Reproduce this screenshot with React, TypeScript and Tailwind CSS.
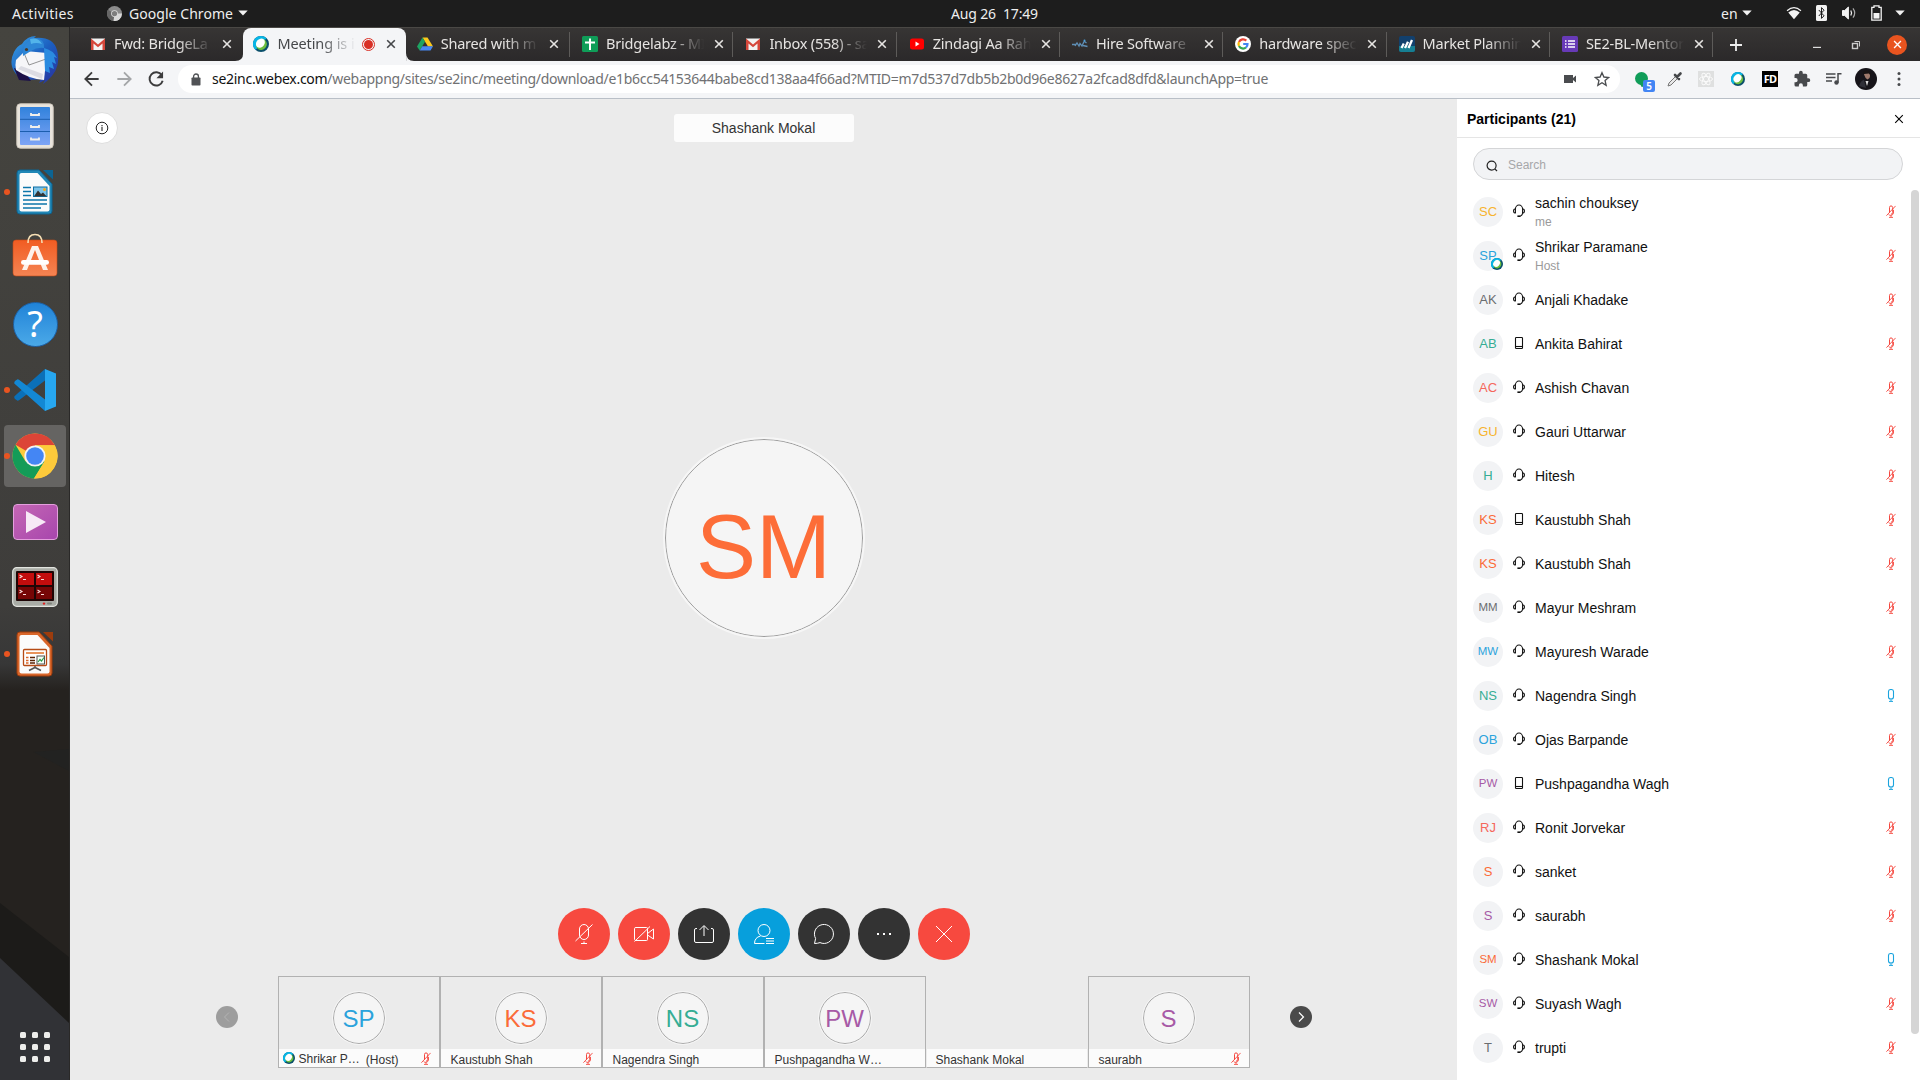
import type { ReactNode } from "react";

const ubuntu = "font-['Noto_Sans',sans-serif]";

/* ---------- shared glyphs ---------- */

function WebexBall({ className }: { className: string }) {
  return (
    <svg viewBox="0 0 16 16" className={className}>
      <circle cx="8" cy="8" r="8" fill="#0a4f6b" />
      <path d="M8 0A8 8 0 0 0 2.600 13.900L8 8 13.600 2.300A8 8 0 0 0 8 0Z" fill="#08b5e6" />
      <ellipse cx="8.400" cy="8.400" rx="5.300" ry="5.700" transform="rotate(40 8.400 8.400)" fill="#6cbf3f" />
      <ellipse cx="7.400" cy="7.200" rx="4.100" ry="5" transform="rotate(40 7.400 7.200)" fill="#fff" />
    </svg>
  );
}

function CloseGlyph({ className }: { className: string }) {
  return (
    <svg viewBox="0 0 10 10" className={className} fill="none" stroke="currentColor">
      <path d="M1.2 1.2 8.8 8.8M8.8 1.2 1.2 8.8" />
    </svg>
  );
}

function MicOff({ className }: { className: string }) {
  return (
    <svg viewBox="0 0 10 13" className={className} fill="none" stroke="#f5483f">
      <path d="M3.500 7.800V2.500Q3.500 0.900 5 0.900T6.700 2.500V7.500Q6.700 9.200 5 9.200" />
      <path d="M2.500 9.300Q3.300 10.400 5 10.400T7.500 8V5M5 10.400V12M3 12.400H7M0.400 10.700 9.600 0.900" strokeWidth="0.900" />
    </svg>
  );
}

function MicOn({ className }: { className: string }) {
  return (
    <svg viewBox="0 0 10 13" className={className} fill="none" stroke="#1ba4de">
      <path d="M2.500 2.500Q2.500 0.500 5 0.500T7.500 2.500V8Q7.500 10 5 10T2.500 8Z" strokeWidth="1.100" />
      <path d="M5 10.400V12M3 12.400H7" strokeWidth="1" />
    </svg>
  );
}

function Headset() {
  return (
    <svg viewBox="0 0 14 14" className="h-[14px] w-[14px]" fill="none" stroke="#111" strokeWidth="1.1">
      <path d="M3.400 9.300V5.300A3.600 4.300 0 0 1 10.600 5.300V9.300M3.400 4.800Q1.500 5 1.500 7T3.400 9.200M10.600 4.800Q12.500 5 12.500 7T10.600 9.200M10.600 9.500Q10 11.500 8.400 12" />
      <path d="M5.400 12.200H8.600" strokeWidth="1.6" />
    </svg>
  );
}

function Phone() {
  return (
    <svg viewBox="0 0 14 14" className="h-[14px] w-[14px]" fill="none" stroke="#111" strokeWidth="1.1">
      <rect x="3.500" y="1.500" width="7" height="11" rx="0.8" />
      <path d="M3.500 10.500H10.500" />
    </svg>
  );
}

/* ---------- GNOME top bar ---------- */

function Caret({ className }: { className: string }) {
  return (
    <svg viewBox="0 0 10 6" className={className}>
      <path d="M0.3 0.4H9.7L5 5.6Z" fill="#f2f2f2" />
    </svg>
  );
}

function TopBar() {
  return (
    <header className={`relative flex h-[27px] shrink-0 items-center bg-[#1d1d1d] pb-px text-[14px] text-[#eee] ${ubuntu}`}>
      <span className="ml-3 w-[95px] whitespace-nowrap tracking-[0.350px]">Activities</span>
      <svg viewBox="0 0 16 16" className="h-[15px] w-[15px]">
        <circle cx="8" cy="8" r="8" fill="#8b8b8b" />
        <path d="M8 8 1 4A8 8 0 0 0 7 16Z" fill="#666" />
        <path d="M8 8H16A8 8 0 0 1 7 16Z" fill="#d8d8d8" />
        <circle cx="8" cy="8" r="3.6" fill="#ddd" />
        <circle cx="8" cy="8" r="2.8" fill="#7d7d7d" />
      </svg>
      <span className="ml-[7px] w-[109px] whitespace-nowrap tracking-[0.050px]">Google Chrome</span>
      <Caret className="h-[6px] w-[10px]" />
      <span className="absolute left-[951px] whitespace-pre tracking-[-0.15px]">Aug 26  17:49</span>
      <div className="ml-auto flex items-center">
        <span className="mr-[5px] w-[16px]">en</span>
        <Caret className="mr-[34px] h-[6px] w-[10px]" />
        <svg viewBox="0 0 16 14" className="mr-[14px] h-[13px] w-[16px]">
          <path d="M0.5 4Q8-2.6 15.5 4" fill="none" stroke="#f2f2f2" strokeWidth="1.3" />
          <path d="M1.8 6Q8 0.6 14.2 6L8 13.2Z" fill="#f2f2f2" />
        </svg>
        <svg viewBox="0 0 11 16" className="mr-[15px] h-4 w-[11px]">
          <rect width="11" height="16" rx="1.5" fill="#f2f2f2" />
          <path d="M2.8 5 8 10.8 5.5 13.4V2.6L8 5.2 2.8 11" fill="none" stroke="#1d1d1d" />
        </svg>
        <svg viewBox="0 0 15 14" className="mr-[14px] h-[14px] w-[15px]" fill="none" stroke="#f2f2f2">
          <path d="M0.5 4.5H2.7L6.4 1V13L2.7 9.5H0.5Z" fill="#f2f2f2" />
          <path d="M8.8 4.5Q10.4 7 8.8 9.5" strokeWidth="1.3" />
          <path d="M11 2.3Q14.4 7 11 11.7" stroke="#aaa" strokeWidth="1.2" />
        </svg>
        <svg viewBox="0 0 11 16" className="mr-[13px] h-4 w-[11px]">
          <path d="M3 0.8H8V2.4H10.2V15.2H0.8V2.4H3Z" fill="none" stroke="#f2f2f2" strokeWidth="1.3" />
          <rect x="2.5" y="8" width="6" height="5.6" fill="#f2f2f2" />
        </svg>
        <Caret className="mr-[15px] h-[6px] w-[10px]" />
      </div>
    </header>
  );
}

/* ---------- dock ---------- */

function Thunderbird() {
  return (
    <svg viewBox="0 0 48 48" className="h-12 w-12">
      <defs>
        <linearGradient id="tb" x1="0" y1="0" x2="1" y2="1">
          <stop offset="0" stopColor="#3aa3e6" />
          <stop offset=".5" stopColor="#1c5fc0" />
          <stop offset="1" stopColor="#2a2e9a" />
        </linearGradient>
      </defs>
      <path d="M11 8Q16 0 25 0L23 2Q42 0 46 14Q51 32 36 45L32 48 34 44 28 47 30 43Q12 46 5 38Q-3 28 3 16Q6 10 11 8Z" fill="url(#tb)" />
      <path d="M3 32 8 44 20 45 14 36Z" fill="#1c1048" />
      <path d="M5 24 14 15 36 17 33 44Q18 43 5 34Q4 28 5 24Z" fill="#f6f6f8" />
      <path d="M7 33 31 43 32 38 10 30Z" fill="#dcdce3" />
      <path d="M13 17 18 29 35 23" fill="none" stroke="#888" strokeWidth="0.9" />
      <path d="M12 20Q11 6 24 2Q34 3 33 12Q26 11 20 15Q15 18 12 20Z" fill="#2d86d6" />
      <path d="M19 3Q27 1 31 8Q25 6 20 8Z" fill="#52b3ea" />
      <path d="M33 12Q42 14 46 22L43 21 45 28 41 26 43 33 38 31 39 37 34 35Z" fill="#2a8be0" />
      <circle cx="15.5" cy="13.5" r="1.6" fill="#4b3827" />
    </svg>
  );
}

function Files() {
  return (
    <svg viewBox="0 0 38 46" className="h-[46px] w-[38px]">
      <defs>
        <linearGradient id="fl" x1="0" y1="0" x2="0" y2="1">
          <stop offset="0" stopColor="#3182dc" />
          <stop offset="1" stopColor="#7ea4f6" />
        </linearGradient>
      </defs>
      <rect x="0.8" y="0.8" width="36.4" height="44.4" rx="3.5" fill="#e9e4dc" stroke="#cfc8bd" />
      <rect x="4" y="4" width="30" height="38" rx="1" fill="url(#fl)" />
      <path d="M4 16.3H34M4 28.5H34" stroke="#1c5eae" />
      <path d="M15 10V12H23V10M15 22V24H23V22M15 34.5V36.500H23V34.5" fill="none" stroke="#f2f0ec" strokeWidth="1.8" />
    </svg>
  );
}

function Doc({ frame, dark, children }: { frame: string; dark: string; children: ReactNode }) {
  return (
    <svg viewBox="0 0 38 46" className="h-[46px] w-[38px]">
      <path d="M4 1H23L36 15V42Q36 45 33 45H4Q1 45 1 42V4Q1 1 4 1Z" fill={frame} stroke={dark} />
      <path d="M5.500 4H21.5L33.500 17V40.500Q33.5 42.500 31.500 42.500H5.500Q3.500 42.500 3.500 40.500V6Q3.500 4 5.500 4Z" fill="#fbfbfb" />
      <path d="M27 1H37V10.500Z" fill={dark} />
      {children}
    </svg>
  );
}

function Writer() {
  return (
    <Doc frame="#2187b6" dark="#0c6493">
      <path d="M7 18.500H15M7 22.500H15M7 26.500H15M7 31H31M7 35H31M7 39H25" stroke="#0d76aa" strokeWidth="1.7" />
      <rect x="17.500" y="18" width="13.500" height="9.500" fill="#7cc3e8" stroke="#0d6fa3" />
      <path d="M18 27.300 22 21.500 25 25 27 23.500 30.500 27.300Z" fill="#333" />
      <circle cx="28.500" cy="20.500" r="1.500" fill="#f3a81c" />
    </Doc>
  );
}

function Impress() {
  return (
    <Doc frame="#d9662a" dark="#9c3c0d">
      <rect x="7.500" y="18.500" width="23" height="16" rx="1" fill="#fff" stroke="#b64b15" strokeWidth="1.300" />
      <path d="M10 22H28" stroke="#e8935b" strokeWidth="2" />
      <path d="M10 26.500H12.500M10 29.500H12.500M10 32H12.500" stroke="#d9662a" strokeWidth="1.400" />
      <path d="M14 26.500H19M14 29.500H19M14 32H19" stroke="#5a2305" strokeWidth="1.600" />
      <rect x="21" y="25" width="7.500" height="8" fill="#f5fff7" stroke="#555" />
      <path d="M22 31 24 28.500 25.500 30 28 26.500" fill="none" stroke="#2c9a4a" strokeWidth="1.200" />
      <path d="M19 35V37M13 39.500 19 36.500 25 39.500" fill="none" stroke="#555" strokeWidth="1.600" />
    </Doc>
  );
}

function Software() {
  return (
    <svg viewBox="0 0 46 44" className="mb-[6px] h-11 w-[46px]">
      <defs>
        <linearGradient id="sw" x1="0" y1="0" x2="0" y2="1">
          <stop offset="0" stopColor="#f15c22" />
          <stop offset="1" stopColor="#f58453" />
        </linearGradient>
      </defs>
      <rect x="1" y="7" width="44" height="36" rx="3" fill="url(#sw)" stroke="#c44a1a" strokeWidth="0.600" />
      <path d="M16 10Q16 1.500 23 1.500T30 10" fill="none" stroke="#f6dfb4" strokeWidth="1.600" />
      <path d="M20 13H26L36 37H31L23 17 15 37H10Z" fill="#fdf1ea" />
      <rect x="9" y="27" width="28" height="4.800" rx="2.400" fill="#fff" />
    </svg>
  );
}

function Help() {
  return (
    <div className="flex h-[45px] w-[45px] items-center justify-center rounded-full border border-[#1d62a8] bg-linear-to-b from-[#1f83d8] to-[#4aa9e8] font-['Noto_Sans',sans-serif] text-[36px] leading-none text-white">
      ?
    </div>
  );
}

function VsCode() {
  return (
    <svg viewBox="0 0 42 42" className="h-[42px] w-[42px]">
      <path d="M31 0 3.500 24.500 0.300 27.500Q0 29 1 30L3.200 31.500Q4 32 5 31.200L31 11.500Z" fill="#0b70b8" />
      <path d="M31 42 0.300 14.500Q0 13 1 12L3.200 10.500Q4 10 5 10.800L31 30.500Z" fill="#1388d4" />
      <path d="M31 0 42 4.500V37.500L31 42Z" fill="#27a7f0" />
    </svg>
  );
}

function Chrome() {
  return (
    <svg viewBox="0 0 46 46" className="h-[46px] w-[46px]">
      <circle cx="23" cy="23" r="22.500" fill="#fdca3b" />
      <path d="M23 23 3.500 11.750A22.500 22.500 0 0 1 42.800 12.300H23Z" fill="#dc4437" />
      <path d="M3.500 11.750A22.500 22.500 0 0 0 22 45.500L32.500 28.500 23 23 13.500 28.400Z" fill="#149c58" />
      <path d="M32.500 28.500 22 45.500A22.500 22.500 0 0 0 42.800 12.300H23Z" fill="#fdca3b" />
      <circle cx="23" cy="23" r="10.600" fill="#f3f3f3" />
      <circle cx="23" cy="23" r="8.800" fill="#4486f4" />
    </svg>
  );
}

function Videos() {
  return (
    <div className="flex h-9 w-[45px] items-center justify-center rounded-[4px] border border-[#e49fdd] bg-linear-to-br from-[#c466b4] to-[#a846ad]">
      <svg viewBox="0 0 20 22" className="ml-0.5 h-[22px] w-5">
        <path d="M0 0 20 11 0 22Z" fill="#f7e9f6" />
      </svg>
    </div>
  );
}

function Terminator() {
  return (
    <svg viewBox="0 0 46 40" className="mb-[2px] h-10 w-[46px]">
      <rect x="0.700" y="0.700" width="44.600" height="38.600" rx="4" fill="#a9aca6" stroke="#e2e4df" strokeWidth="1.200" />
      <rect x="4" y="4" width="38" height="30" rx="1" fill="#1f0606" />
      <path d="M6 6H22V18H6ZM24 6H40V18H24Z" fill="#c20d0d" />
      <path d="M6 20H22V32H6ZM24 20H40V32H24Z" fill="#760606" />
      <path d="M7.500 8 10 9.500 7.500 11M11 12.500H14M25.500 8 28 9.500 25.500 11M29 12.500H32M7.500 23 10 24.500 7.500 26M11 27.500H14M25.500 23 28 24.500 25.500 26M29 27.500H32" fill="none" stroke="#f7d9d9" strokeWidth="1.100" />
      <circle cx="32" cy="36.600" r="1.200" fill="#e02020" />
      <rect x="35" y="35.400" width="5" height="2.200" rx="1" fill="#80837d" />
    </svg>
  );
}

const dockItems: { icon: ReactNode; running?: boolean; active?: boolean }[] = [
  { icon: <Thunderbird /> },
  { icon: <Files /> },
  { icon: <Writer />, running: true },
  { icon: <Software /> },
  { icon: <Help /> },
  { icon: <VsCode />, running: true },
  { icon: <Chrome />, running: true, active: true },
  { icon: <Videos /> },
  { icon: <Terminator /> },
  { icon: <Impress />, running: true },
];

function Dock() {
  return (
    <nav className="relative flex w-[70px] shrink-0 flex-col items-center justify-between border-r border-[#2a2928] bg-[#3e3d3b]">
      <svg viewBox="0 0 70 1053" className="absolute inset-0 h-full w-full" preserveAspectRatio="none">
        <defs>
          <linearGradient id="wall" x1="0" y1="0" x2="0" y2="1">
            <stop offset="0" stopColor="#45443f" />
            <stop offset=".55" stopColor="#3e3d3b" />
            <stop offset=".605" stopColor="#373737" />
            <stop offset=".63" stopColor="#25221f" />
            <stop offset="1" stopColor="#25221f" />
          </linearGradient>
        </defs>
        <rect width="70" height="1053" fill="url(#wall)" />
        <path d="M34 725 70 722V744Z" fill="#222221" />
        <path d="M0 876 70 930V1000L0 935Z" fill="#1c1b19" />
        <path d="M0 931 70 996V1053H0Z" fill="#313236" />
      </svg>
      <ul className="relative w-full">
        {dockItems.map((item, i) => (
          <li key={i} className="relative flex h-[66px] items-center justify-center py-[2px] pr-[3px] pl-1">
            <div className={`flex h-full w-full items-center justify-center rounded-[4px] ${item.active ? "bg-[#656462]" : ""}`}>
              {item.icon}
            </div>
            {item.running && <span className="absolute top-[30px] left-1 h-[6px] w-[6px] rounded-full bg-[#e95420]" />}
          </li>
        ))}
      </ul>
      <div className="relative mb-[18px] ml-px grid grid-cols-3 gap-[6px]">
        {Array.from({ length: 9 }, (_, i) => (
          <span key={i} className="h-[6px] w-[6px] rounded-[1.5px] bg-[#eeeeec]" />
        ))}
      </div>
    </nav>
  );
}

/* ---------- browser chrome ---------- */

function Gmail() {
  return (
    <svg viewBox="0 0 16 16" className="h-4 w-4">
      <path d="M1 2.500H15V14H1Z" fill="#f3f3f3" />
      <path d="M1 2.500 8 8.500 15 2.500V14H12.500V7.500L8 11.200 3.500 7.500V14H1Z" fill="#d5473b" />
    </svg>
  );
}

function Drive() {
  return (
    <svg viewBox="0 0 16 16" className="h-4 w-4">
      <path d="M5.500 1.500H10.500L16 10.500H11Z" fill="#fbc91c" />
      <path d="M5.500 1.500 8 5.700 2.700 14.500 0 10.500Z" fill="#1da362" />
      <path d="M2.700 14.500 5.300 10.300H16L13.500 14.500Z" fill="#4688f4" />
    </svg>
  );
}

const tabs: { title: string; icon: ReactNode; active?: boolean }[] = [
  { title: "Fwd: BridgeLa", icon: <Gmail /> },
  { title: "Meeting is i", icon: <WebexBall className="h-4 w-4" />, active: true },
  { title: "Shared with m", icon: <Drive /> },
  {
    title: "Bridgelabz - MI",
    icon: (
      <svg viewBox="0 0 16 16" className="h-4 w-4">
        <rect width="16" height="16" rx="1.500" fill="#0f9d58" />
        <path d="M8 2.500V14M3 6.500H13" stroke="#fff" strokeWidth="2" />
      </svg>
    ),
  },
  { title: "Inbox (558) - sa", icon: <Gmail /> },
  {
    title: "Zindagi Aa Rah",
    icon: (
      <svg viewBox="0 0 16 16" className="h-4 w-4">
        <rect x="1" y="2.500" width="14" height="11" rx="2.500" fill="#f00" />
        <path d="M6.500 5.600 10.500 8 6.500 10.400Z" fill="#fff" />
      </svg>
    ),
  },
  {
    title: "Hire Software",
    icon: (
      <svg viewBox="0 0 16 16" className="h-4 w-4" fill="none" stroke="#5f8fb5">
        <path d="M0 8.500H4M3 10 5 7 7 10 8 7.500 10 10 12 5.500M11 9.500 15.500 10.500M12 5 14.500 7" strokeWidth="1.300" />
        <circle cx="12.500" cy="4.500" r="1" fill="#4aa3e0" stroke="none" />
      </svg>
    ),
  },
  {
    title: "hardware spec",
    icon: (
      <svg viewBox="0 0 16 16" className="h-4 w-4" fill="none" strokeWidth="2.200">
        <circle cx="8" cy="8" r="8" fill="#fff" />
        <path d="M11.300 4.600A4.600 4.600 0 0 0 4 6" stroke="#ea4335" />
        <path d="M4 6A4.600 4.600 0 0 0 4 10" stroke="#fbbc05" />
        <path d="M4 10A4.600 4.600 0 0 0 11 11.500" stroke="#34a853" />
        <path d="M11 11.500Q12.600 10 12.500 8H8.200" stroke="#4285f4" />
      </svg>
    ),
  },
  {
    title: "Market Plannin",
    icon: (
      <svg viewBox="0 0 16 16" className="h-4 w-4">
        <rect width="16" height="16" rx="2" fill="#12406d" />
        <path d="M0 10H16V14Q16 16 14 16H2Q0 16 0 14Z" fill="#167f93" />
        <path d="M2.500 12 4.800 7.500M6 12 9 5.800M9.500 12 13 4" stroke="#fff" strokeWidth="2.300" />
      </svg>
    ),
  },
  {
    title: "SE2-BL-Mentor",
    icon: (
      <svg viewBox="0 0 16 16" className="h-4 w-4">
        <rect width="16" height="16" rx="1.500" fill="#673ab7" />
        <path d="M3 5H4.500M3 8H4.500M3 11H4.500M6 5H13M6 8H13M6 11H13" stroke="#fff" strokeWidth="1.500" />
      </svg>
    ),
  },
];

function TabStrip() {
  return (
    <div className={`flex h-[34px] shrink-0 items-center border-t border-[#4a4845] bg-linear-to-b from-[#373534] to-[#2b292a] pl-[9.500px] text-[14.500px] ${ubuntu}`}>
      {tabs.map((tab, i) => (
        <div
          key={tab.title}
          className={`relative flex h-[33px] shrink-0 items-center pb-px ${i > 2 ? "pl-[12px]" : "pl-[10.600px]"} ${
            i === 2 ? "w-[164px]" : "w-[163.300px]"
          } ${tab.active ? "rounded-t-lg bg-[#f4f5f7] text-[#45474a]" : "text-[#e6e4e2]"}`}
        >
          {tab.active && (
            <svg viewBox="0 0 179 8" className="absolute bottom-0 -left-2 h-2 w-[179.300px]" fill="#f4f5f7">
              <path d="M0 8Q8 8 8 0V8ZM179 8Q171 8 171 0V8Z" />
            </svg>
          )}
          {tab.icon}
          <span
            className={`-mt-px ml-2 overflow-hidden whitespace-nowrap ${
              tab.active
                ? "w-[79px] tracking-[-0.100px] mask-r-from-55% mask-r-to-100%"
                : "w-[98px] tracking-[-0.220px] mask-r-from-65% mask-r-to-100%"
            }`}
          >
            {tab.title}
          </span>
          {tab.active && (
            <span className="ml-[6px] flex h-[13px] w-[13px] items-center justify-center rounded-full border border-[#d93025]">
              <span className="h-[9px] w-[9px] rounded-full bg-[#d93025]" />
            </span>
          )}
          <CloseGlyph className={`h-[10px] w-[10px] stroke-[1.600] ${tab.active ? "ml-[11px]" : "ml-[10px]"}`} />
          {i > 1 && <span className="ml-auto h-[25px] w-px bg-[#5d5b59]" />}
        </div>
      ))}
      <svg viewBox="0 0 14 14" className="ml-[16px] h-[14px] w-[14px]" stroke="#eee" strokeWidth="1.800">
        <path d="M7 1V13M1 7H13" />
      </svg>
      <div className="ml-auto flex items-center pr-[13px]">
        <svg viewBox="0 0 10 10" className="mr-[30px] h-[10px] w-2">
          <path d="M0 8H10" stroke="#ddd" strokeWidth="1.500" />
        </svg>
        <svg viewBox="0 0 10 10" className="mr-[26px] h-[10px] w-[10px]" fill="none" stroke="#ccc">
          <rect x="1.500" y="3.500" width="5" height="5" strokeWidth="1.400" />
          <path d="M3.500 1.500H8.500V6.500" />
        </svg>
        <span className="flex h-5 w-5 items-center justify-center rounded-full bg-[#e9541f] text-white">
          <CloseGlyph className="h-[9px] w-[9px] stroke-[1.500]" />
        </span>
      </div>
    </div>
  );
}

function Toolbar() {
  return (
    <div className={`flex h-[38px] shrink-0 items-center border-b border-[#b9bfc7] bg-[#f4f5f7] pb-px ${ubuntu}`}>
      <svg viewBox="0 0 24 24" className="ml-[12px] h-5 w-5" fill="none" stroke="#3c3c3d" strokeWidth="2.200">
        <path d="M20 12H4M12 4 4 12 12 20" />
      </svg>
      <svg viewBox="0 0 24 24" className="ml-[12px] h-5 w-5" fill="none" stroke="#a4a6a8" strokeWidth="2.200">
        <path d="M4 12H20M12 4 20 12 12 20" />
      </svg>
      <svg viewBox="0 0 24 24" className="ml-[12px] h-5 w-5">
        <path d="M19 7.500A8 8 0 1 0 20 14" fill="none" stroke="#3c3c3d" strokeWidth="2.300" />
        <path d="M20.500 3V11H12.500Z" fill="#3c3c3d" />
      </svg>
      <div className="ml-[12px] flex h-7 w-[1442px] items-center rounded-full bg-white pl-[13px] text-[14px]">
        <svg viewBox="0 0 10 13" className="h-[13px] w-[10px]">
          <rect x="0.500" y="4.500" width="9" height="8" rx="0.800" fill="#505255" />
          <path d="M2.600 5V3.200A2.400 2.200 0 0 1 7.400 3.200V5" fill="none" stroke="#505255" strokeWidth="1.300" />
        </svg>
        <span className="-mt-px ml-[11px] tracking-[-0.285px] whitespace-nowrap text-[#707173]">
          <span className="text-[#111]">se2inc.webex.com</span>
          <span>/webappng/sites/se2inc/meeting/download/e1b6cc54153644babe8cd138aa4f66ad?MTID=m7d537d7db5b2b0d96e8627a2fcad8dfd&amp;launchApp=true</span>
        </span>
        <svg viewBox="0 0 12 8" className="ml-auto h-2 w-3" fill="#4a4c4f">
          <path d="M0 0H9V3L12 0.500V7.500L9 5V8H0Z" />
        </svg>
        <svg viewBox="0 0 24 24" className="mr-[10px] ml-[18px] h-4 w-4" fill="none" stroke="#4a4c4f" strokeWidth="2">
          <path d="M12 2.500 14.900 9 22 9.700 16.600 14.400 18.200 21.500 12 17.700 5.800 21.500 7.400 14.400 2 9.700 9.100 9Z" />
        </svg>
      </div>
      <div className="ml-[14px] flex items-center">
        <div className="relative mr-[18px] h-[15px] w-[15px]">
          <svg viewBox="0 0 15 15" className="h-[15px] w-[15px]" fill="#109d59">
            <circle cx="7.500" cy="6.500" r="6.500" />
            <path d="M6 12H11L8 15.500Z" />
          </svg>
          <span className="absolute top-[8px] left-[9px] h-3 w-3 rounded-[2px] bg-[#4285f4] text-center text-[10px] leading-3 font-semibold text-white">5</span>
        </div>
        <svg viewBox="0 0 16 16" className="mr-[15px] h-4 w-4">
          <path d="M1 15 2 12 9 5 11 7 4 14Z" fill="#e8e8e8" stroke="#777" />
          <path d="M8 4 12 8M10 6 13.500 2.500" stroke="#45474a" strokeWidth="2.600" strokeLinecap="round" />
        </svg>
        <svg viewBox="0 0 16 16" className="mr-[17px] h-4 w-4" fill="none" stroke="#fafafa">
          <rect width="16" height="16" fill="#dfe0e0" stroke="none" />
          <ellipse cx="8" cy="8" rx="6.500" ry="2.500" />
          <ellipse cx="8" cy="8" rx="6.500" ry="2.500" transform="rotate(60 8 8)" />
          <ellipse cx="8" cy="8" rx="6.500" ry="2.500" transform="rotate(120 8 8)" />
        </svg>
        <WebexBall className="mr-[17px] h-[14px] w-[14px]" />
        <span className="mr-[15px] flex h-4 w-4 items-center justify-center bg-black text-[11px] font-bold tracking-[-0.800px] text-white">FD</span>
        <svg viewBox="0 0 24 24" className="mr-[15px] h-[18px] w-[18px]" fill="#47494c">
          <path d="M20.500 11H19V7a2 2 0 0 0-2-2h-4V3.500a2.500 2.500 0 0 0-5 0V5H4a2 2 0 0 0-2 2v3.800h1.500a2.700 2.700 0 0 1 0 5.400H2V20a2 2 0 0 0 2 2h3.800v-1.500a2.700 2.700 0 0 1 5.400 0V22H17a2 2 0 0 0 2-2v-4h1.500a2.500 2.500 0 0 0 0-5Z" />
        </svg>
        <svg viewBox="0 0 16 14" className="mr-[13px] h-[14px] w-4">
          <path d="M0 2H9.500M0 5.500H9.500M0 9H6" stroke="#47494c" strokeWidth="1.500" />
          <circle cx="10.500" cy="10.500" r="2.200" fill="#47494c" />
          <path d="M12 10.500V1.800H15.500" fill="none" stroke="#47494c" strokeWidth="1.500" />
        </svg>
        <svg viewBox="0 0 22 22" className="mr-[20px] h-[22px] w-[22px]">
          <circle cx="11" cy="11" r="11" fill="#17151a" />
          <path d="M9 6.500Q10 3 13.500 4.500 16 6 14.500 10L12.500 11.500Q10 10 9 6.500Z" fill="#a07a6c" />
          <path d="M8 6Q8 1.500 13 2.500 16.500 4 16 8L14 5.500 9 6Z" fill="#191414" />
          <path d="M10.500 13 12 18 13.500 13Z" fill="#ddd" />
          <path d="M4 18Q6 12 9 12L11 20Z" fill="#303038" />
        </svg>
        <svg viewBox="0 0 4 16" className="h-4 w-1" fill="#47494c">
          <circle cx="2" cy="2.500" r="1.500" />
          <circle cx="2" cy="8" r="1.500" />
          <circle cx="2" cy="13.500" r="1.500" />
        </svg>
      </div>
    </div>
  );
}

/* ---------- meeting stage ---------- */

const controls: { color: string; icon: ReactNode }[] = [
  {
    color: "bg-[#f7493f]",
    icon: (
      <>
        <rect x="7.500" y="2.500" width="9" height="15" rx="4.500" />
        <path d="M12 19.500V21.500M9 21.500H15M3.500 19 20.500 2.500" />
      </>
    ),
  },
  { color: "bg-[#f7493f]", icon: <path d="M4 5.500H14.500Q15.500 5.500 15.500 6.500V17.500Q15.500 18.500 14.500 18.500H4Q2.500 18.500 2.500 17.500V6.500Q2.500 5.500 4 5.500ZM15.500 11.500 21.500 7V17L15.500 13M2.500 19.500 18 4.500" /> },
  { color: "bg-[#333333]", icon: <path d="M5 6.500H4Q2.500 6.500 2.500 8V19Q2.500 20.500 4 20.500H20Q21.500 20.500 21.500 19V8Q21.500 6.500 20 6.500H19M12 14V4M7.500 8 12 3.500 16.500 8" /> },
  {
    color: "bg-[#079fdc]",
    icon: (
      <>
        <circle cx="12" cy="8.500" r="6" />
        <path d="M12.500 21.500H2.500Q2.500 15.500 8.500 14M14 16.500H22M14 19H22M14 21.500H22" />
      </>
    ),
  },
  { color: "bg-[#333333]", icon: <path d="M2.500 21.500 3.600 16.500A9.500 9.500 0 1 1 8 20.600Q5.500 21.500 2.500 21.500Z" /> },
  { color: "bg-[#333333]", icon: <path d="M5 12H7M11 12H13M17 12H19" strokeWidth="1.800" /> },
  { color: "bg-[#f7493f]", icon: <path d="M4 4 20 20M20 4 4 20" /> },
];

const tiles: { name: string; initials?: string; color?: string; host?: boolean; muted?: boolean }[] = [
  { name: "Shrikar P…", initials: "SP", color: "text-[#2ba3dc]", host: true, muted: true },
  { name: "Kaustubh Shah", initials: "KS", color: "text-[#fb6b38]", muted: true },
  { name: "Nagendra Singh", initials: "NS", color: "text-[#36ad94]" },
  { name: "Pushpagandha W…", initials: "PW", color: "text-[#a75aa6]" },
  { name: "Shashank Mokal" },
  { name: "saurabh", initials: "S", color: "text-[#a75aa6]", muted: true },
];

function Stage() {
  return (
    <main className="relative flex flex-1 flex-col items-center bg-[#ebebeb]">
      <button className="absolute top-[13px] left-[16px] flex h-8 w-8 items-center justify-center rounded-full border border-[#dedede] bg-white">
        <svg viewBox="0 0 14 14" className="h-[14px] w-[14px]" fill="none" stroke="#222">
          <circle cx="7" cy="7" r="5.800" />
          <path d="M7 6V10M7 4V5.200" strokeWidth="1.100" />
        </svg>
      </button>
      <div className="mt-[15px] flex h-7 w-[180px] items-center justify-center rounded-[3px] bg-[#fcfcfc] text-[14px] text-[#333]">
        Shashank Mokal
      </div>
      <div className="mt-[297px] flex h-[198px] w-[198px] items-center justify-center rounded-full border border-[#9c9c9c] bg-[#f5f5f5] text-[90px] leading-none text-[#fd6d38] outline-2 outline-[#f6f6f6]">
        <span className="mt-[17px]">SM</span>
      </div>
      <div className="mt-[271px] flex gap-2">
        {controls.map((c, i) => (
          <button key={i} className={`flex h-[52px] w-[52px] items-center justify-center rounded-full ${c.color}`}>
            <svg viewBox="0 0 24 24" className="h-6 w-6" fill="none" stroke="#fff" strokeWidth="1">
              {c.icon}
            </svg>
          </button>
        ))}
      </div>
      <div className="mt-4 flex w-full items-center justify-center">
        <span className="-mt-[11px] mr-10 flex h-[22px] w-[22px] items-center justify-center rounded-full bg-[#9d9d9d]">
          <svg viewBox="0 0 12 12" className="h-3 w-3" fill="none" stroke="#b4b4b4">
            <path d="M8 1.500 3.500 6 8 10.500" />
          </svg>
        </span>
        <ul className="flex">
          {tiles.map((t) => (
            <li
              key={t.name}
              className={`flex h-[92px] w-[162px] flex-col border border-[#b1b1b1] ${t.initials ? "" : "border-x-transparent border-t-transparent"}`}
            >
              <div className="flex flex-1 items-center justify-center">
                {t.initials && (
                  <span className={`mt-[10px] flex h-[52px] w-[52px] items-center justify-center rounded-full border border-[#a9a9a9] bg-[#f5f5f5] pt-[2px] text-[24px] leading-none outline-1 outline-[#f6f6f6] ${t.color}`}>
                    {t.initials}
                  </span>
                )}
              </div>
              <div className="flex h-[18px] items-center bg-[#fbfbfb] text-[12px] leading-none text-[#333]">
                {t.host && <WebexBall className="ml-1 h-3 w-3" />}
                <span className={t.host ? "mt-[2px] ml-[4px]" : t.initials ? "mt-1 ml-[10px]" : "mt-1 ml-[9px]"}>{t.name}</span>
                {t.host && <span className="mt-1 ml-[6px]">(Host)</span>}
                {t.muted && <MicOff className="mr-[8px] ml-auto h-[13px] w-[10px]" />}
              </div>
            </li>
          ))}
        </ul>
        <span className="-mt-[11px] ml-10 flex h-[22px] w-[22px] items-center justify-center rounded-full bg-[#4a4a4a]">
          <svg viewBox="0 0 12 12" className="h-3 w-3" fill="none" stroke="#fff" strokeWidth="1.200">
            <path d="M4 1.500 8.500 6 4 10.500" />
          </svg>
        </span>
      </div>
    </main>
  );
}

/* ---------- participants ---------- */

const blue = "text-[#2ba3dc]";
const orange = "text-[#fb6b38]";
const green = "text-[#36ad94]";
const purple = "text-[#a75aa6]";
const gray = "text-[#6b6d70]";
const yellow = "text-[#f7b32f]";
const coral = "text-[#f5675c]";

type Person = { name: string; initials: string; color: string; role?: string; phone?: boolean; live?: boolean };

const people: Person[] = [
  { name: "sachin chouksey", initials: "SC", color: yellow, role: "me" },
  { name: "Shrikar Paramane", initials: "SP", color: blue, role: "Host" },
  { name: "Anjali Khadake", initials: "AK", color: gray },
  { name: "Ankita Bahirat", initials: "AB", color: green, phone: true },
  { name: "Ashish Chavan", initials: "AC", color: coral },
  { name: "Gauri Uttarwar", initials: "GU", color: yellow },
  { name: "Hitesh", initials: "H", color: green },
  { name: "Kaustubh Shah", initials: "KS", color: orange, phone: true },
  { name: "Kaustubh Shah", initials: "KS", color: orange },
  { name: "Mayur Meshram", initials: "MM", color: gray },
  { name: "Mayuresh Warade", initials: "MW", color: blue },
  { name: "Nagendra Singh", initials: "NS", color: green, live: true },
  { name: "Ojas Barpande", initials: "OB", color: blue },
  { name: "Pushpagandha Wagh", initials: "PW", color: purple, phone: true, live: true },
  { name: "Ronit Jorvekar", initials: "RJ", color: coral },
  { name: "sanket", initials: "S", color: orange },
  { name: "saurabh", initials: "S", color: purple },
  { name: "Shashank Mokal", initials: "SM", color: orange, live: true },
  { name: "Suyash Wagh", initials: "SW", color: purple },
  { name: "trupti", initials: "T", color: gray },
];

function PersonRow({ p }: { p: Person }) {
  const wide = /[MW]/.test(p.initials);
  return (
    <li className="flex h-11 items-center">
      <span className={`relative flex h-[30px] w-[30px] items-center justify-center rounded-full bg-[#f2f3f5] ${p.color} ${wide ? "text-[11.500px]" : "text-[13px]"}`}>
        {p.initials}
        {p.role === "Host" && <WebexBall className="absolute right-0 bottom-[1px] h-3 w-3" />}
      </span>
      <span className="mt-[-2px] ml-[9px]">{p.phone ? <Phone /> : <Headset />}</span>
      <div className="ml-[9px] flex flex-col whitespace-nowrap text-[14px] leading-[18px] text-[#111]">
        <span>{p.name}</span>
        {p.role && <span className="-mb-px pt-px text-[12px] text-[#9a9a9a]">{p.role}</span>}
      </div>
      <span className="ml-auto pb-px">{p.live ? <MicOn className="h-[13px] w-[10px]" /> : <MicOff className="h-[13px] w-[10px]" />}</span>
    </li>
  );
}

function Participants() {
  return (
    <aside className="relative flex w-[463px] shrink-0 flex-col bg-white">
      <div className="flex h-[39px] shrink-0 items-center justify-between border-b border-[#e5e5e5] pt-[2px] pr-4 pl-[10px] text-[14px] font-bold text-black">
        Participants (21)
        <CloseGlyph className="h-[10px] w-[10px] stroke-[1.100]" />
      </div>
      <div className="mt-[10px] ml-4 flex h-8 w-[430px] shrink-0 items-center rounded-full border border-[#d4d5d7] bg-[#f2f3f5] text-[12px] text-[#a6a7a9]">
        <svg viewBox="0 0 12 12" className="mt-[3px] mr-[10px] ml-[12px] h-3 w-3" fill="none" stroke="#222" strokeWidth="1.200">
          <circle cx="5.600" cy="5.600" r="4.500" />
          <path d="M8.800 8.800 11 11" />
        </svg>
        <span className="pt-[2px]">Search</span>
      </div>
      <ul className="mt-[10px] pr-[24px] pl-4">
        {people.map((p, i) => (
          <PersonRow key={i} p={p} />
        ))}
      </ul>
      <span className="absolute top-[91px] right-[1px] h-[844px] w-2 rounded-full bg-[#d5d5d5]" />
    </aside>
  );
}

export default function App() {
  return (
    <div className="flex h-[1080px] w-[1920px] flex-col overflow-hidden font-['Liberation_Sans',Arial,sans-serif]">
      <TopBar />
      <div className="flex min-h-0 flex-1">
        <Dock />
        <div className="flex min-w-0 flex-1 flex-col">
          <TabStrip />
          <Toolbar />
          <div className="flex min-h-0 flex-1">
            <Stage />
            <Participants />
          </div>
        </div>
      </div>
    </div>
  );
}
